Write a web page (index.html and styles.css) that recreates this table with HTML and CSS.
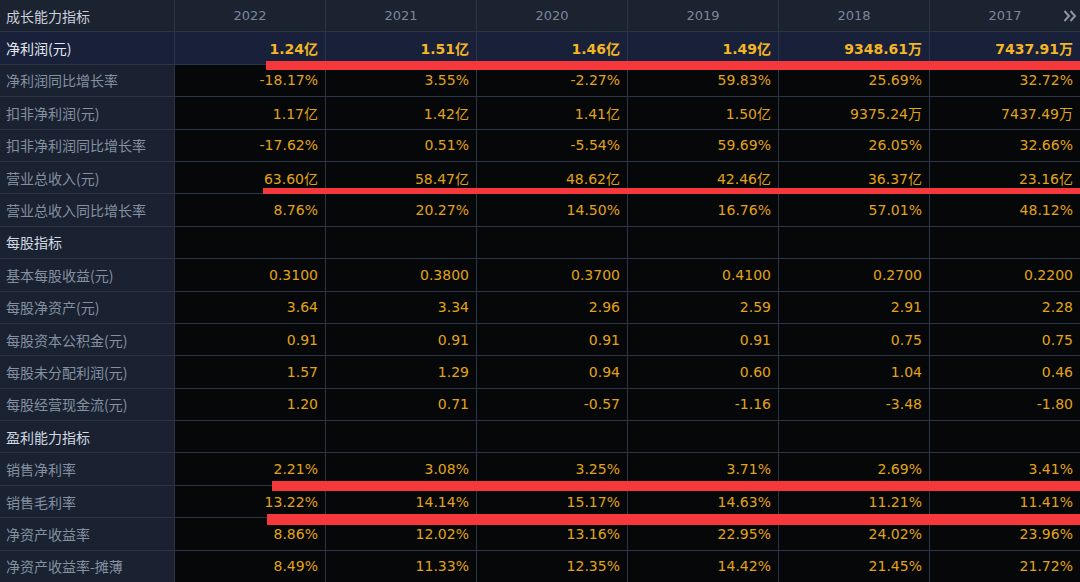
FILE: index.html
```html
<!DOCTYPE html>
<html lang="zh-CN">
<head>
<meta charset="utf-8">
<title>成长能力指标</title>
<link rel="stylesheet" href="styles.css">
</head>
<body>
<div class="sheet">
  <div class="table">
    <div class="row head">
      <div class="label">成长能力指标</div>
      <div class="year">2022</div><div class="year">2021</div><div class="year">2020</div><div class="year">2019</div><div class="year">2018</div><div class="year last">2017
        <svg class="more" width="14" height="12" viewBox="0 0 14 12"><polyline points="1.5,1 6,6 1.5,11" fill="none" stroke="#8a95a6" stroke-width="2"/><polyline points="7.5,1 12,6 7.5,11" fill="none" stroke="#8a95a6" stroke-width="2"/></svg>
      </div>
    </div>
    <div class="row hl">
      <div class="label">净利润(元)</div>
      <div class="num">1.24亿</div><div class="num">1.51亿</div><div class="num">1.46亿</div><div class="num">1.49亿</div><div class="num">9348.61万</div><div class="num">7437.91万</div>
    </div>
    <div class="row">
      <div class="label">净利润同比增长率</div>
      <div class="num">-18.17%</div><div class="num">3.55%</div><div class="num">-2.27%</div><div class="num">59.83%</div><div class="num">25.69%</div><div class="num">32.72%</div>
    </div>
    <div class="row">
      <div class="label">扣非净利润(元)</div>
      <div class="num">1.17亿</div><div class="num">1.42亿</div><div class="num">1.41亿</div><div class="num">1.50亿</div><div class="num">9375.24万</div><div class="num">7437.49万</div>
    </div>
    <div class="row">
      <div class="label">扣非净利润同比增长率</div>
      <div class="num">-17.62%</div><div class="num">0.51%</div><div class="num">-5.54%</div><div class="num">59.69%</div><div class="num">26.05%</div><div class="num">32.66%</div>
    </div>
    <div class="row">
      <div class="label">营业总收入(元)</div>
      <div class="num">63.60亿</div><div class="num">58.47亿</div><div class="num">48.62亿</div><div class="num">42.46亿</div><div class="num">36.37亿</div><div class="num">23.16亿</div>
    </div>
    <div class="row">
      <div class="label">营业总收入同比增长率</div>
      <div class="num">8.76%</div><div class="num">20.27%</div><div class="num">14.50%</div><div class="num">16.76%</div><div class="num">57.01%</div><div class="num">48.12%</div>
    </div>
    <div class="row section">
      <div class="label">每股指标</div>
      <div class="num"></div><div class="num"></div><div class="num"></div><div class="num"></div><div class="num"></div><div class="num"></div>
    </div>
    <div class="row">
      <div class="label">基本每股收益(元)</div>
      <div class="num">0.3100</div><div class="num">0.3800</div><div class="num">0.3700</div><div class="num">0.4100</div><div class="num">0.2700</div><div class="num">0.2200</div>
    </div>
    <div class="row">
      <div class="label">每股净资产(元)</div>
      <div class="num">3.64</div><div class="num">3.34</div><div class="num">2.96</div><div class="num">2.59</div><div class="num">2.91</div><div class="num">2.28</div>
    </div>
    <div class="row">
      <div class="label">每股资本公积金(元)</div>
      <div class="num">0.91</div><div class="num">0.91</div><div class="num">0.91</div><div class="num">0.91</div><div class="num">0.75</div><div class="num">0.75</div>
    </div>
    <div class="row">
      <div class="label">每股未分配利润(元)</div>
      <div class="num">1.57</div><div class="num">1.29</div><div class="num">0.94</div><div class="num">0.60</div><div class="num">1.04</div><div class="num">0.46</div>
    </div>
    <div class="row">
      <div class="label">每股经营现金流(元)</div>
      <div class="num">1.20</div><div class="num">0.71</div><div class="num">-0.57</div><div class="num">-1.16</div><div class="num">-3.48</div><div class="num">-1.80</div>
    </div>
    <div class="row section">
      <div class="label">盈利能力指标</div>
      <div class="num"></div><div class="num"></div><div class="num"></div><div class="num"></div><div class="num"></div><div class="num"></div>
    </div>
    <div class="row">
      <div class="label">销售净利率</div>
      <div class="num">2.21%</div><div class="num">3.08%</div><div class="num">3.25%</div><div class="num">3.71%</div><div class="num">2.69%</div><div class="num">3.41%</div>
    </div>
    <div class="row">
      <div class="label">销售毛利率</div>
      <div class="num">13.22%</div><div class="num">14.14%</div><div class="num">15.17%</div><div class="num">14.63%</div><div class="num">11.21%</div><div class="num">11.41%</div>
    </div>
    <div class="row">
      <div class="label">净资产收益率</div>
      <div class="num">8.86%</div><div class="num">12.02%</div><div class="num">13.16%</div><div class="num">22.95%</div><div class="num">24.02%</div><div class="num">23.96%</div>
    </div>
    <div class="row">
      <div class="label">净资产收益率-摊薄</div>
      <div class="num">8.49%</div><div class="num">11.33%</div><div class="num">12.35%</div><div class="num">14.42%</div><div class="num">21.45%</div><div class="num">21.72%</div>
    </div>
  </div>
  <div class="mark mark-1"></div>
  <div class="mark mark-2"></div>
  <div class="mark mark-3"></div>
  <div class="mark mark-4"></div>
</div>
</body>
</html>
```
FILE: styles.css
```css
html, body {
  margin: 0;
  padding: 0;
  background: #2b3545;
}
.sheet {
  position: relative;
  width: 1080px;
  height: 582px;
  overflow: hidden;
}
.table {
  display: flex;
  flex-direction: column;
  gap: 1px;
  height: 582px;
  background: #2b3545;
}
.row {
  flex: 1;
  display: grid;
  grid-template-columns: 174px repeat(6, 150px);
  gap: 1px;
}
.label {
  background: #1a2231;
  color: #8490a1;
  font-family: "Noto Sans CJK SC", "Noto Sans", sans-serif;
  font-size: 14px;
  display: flex;
  align-items: center;
  padding-left: 6px;
  white-space: nowrap;
}
.num {
  background: #050708;
  color: #e2a318;
  font-family: "DejaVu Sans", "Noto Sans CJK SC", sans-serif;
  font-size: 14px;
  display: flex;
  align-items: center;
  justify-content: flex-end;
  padding-right: 7px;
  white-space: nowrap;
}
.head .label {
  background: #1b2230;
  color: #c9d0db;
}
.year {
  position: relative;
  background: #1b2230;
  color: #7a889c;
  font-family: "DejaVu Sans", sans-serif;
  font-size: 13px;
  display: flex;
  align-items: center;
  justify-content: center;
}
.more {
  position: absolute;
  right: 3px;
  top: 10px;
}
.hl .label {
  background: #18203a;
  color: #e4e9f1;
}
.hl .num {
  background: #18203a;
  color: #f4b623;
  font-weight: bold;
}
.section .label {
  color: #d2d8e2;
}
.mark {
  position: absolute;
  right: 0;
  background: #f4383b;
}
.mark-1 { left: 266px; top: 61px; height: 9px; }
.mark-2 { left: 263px; top: 188px; height: 6px; }
.mark-3 { left: 272px; top: 481px; height: 10px; }
.mark-4 { left: 267px; top: 514px; height: 11px; }
```
